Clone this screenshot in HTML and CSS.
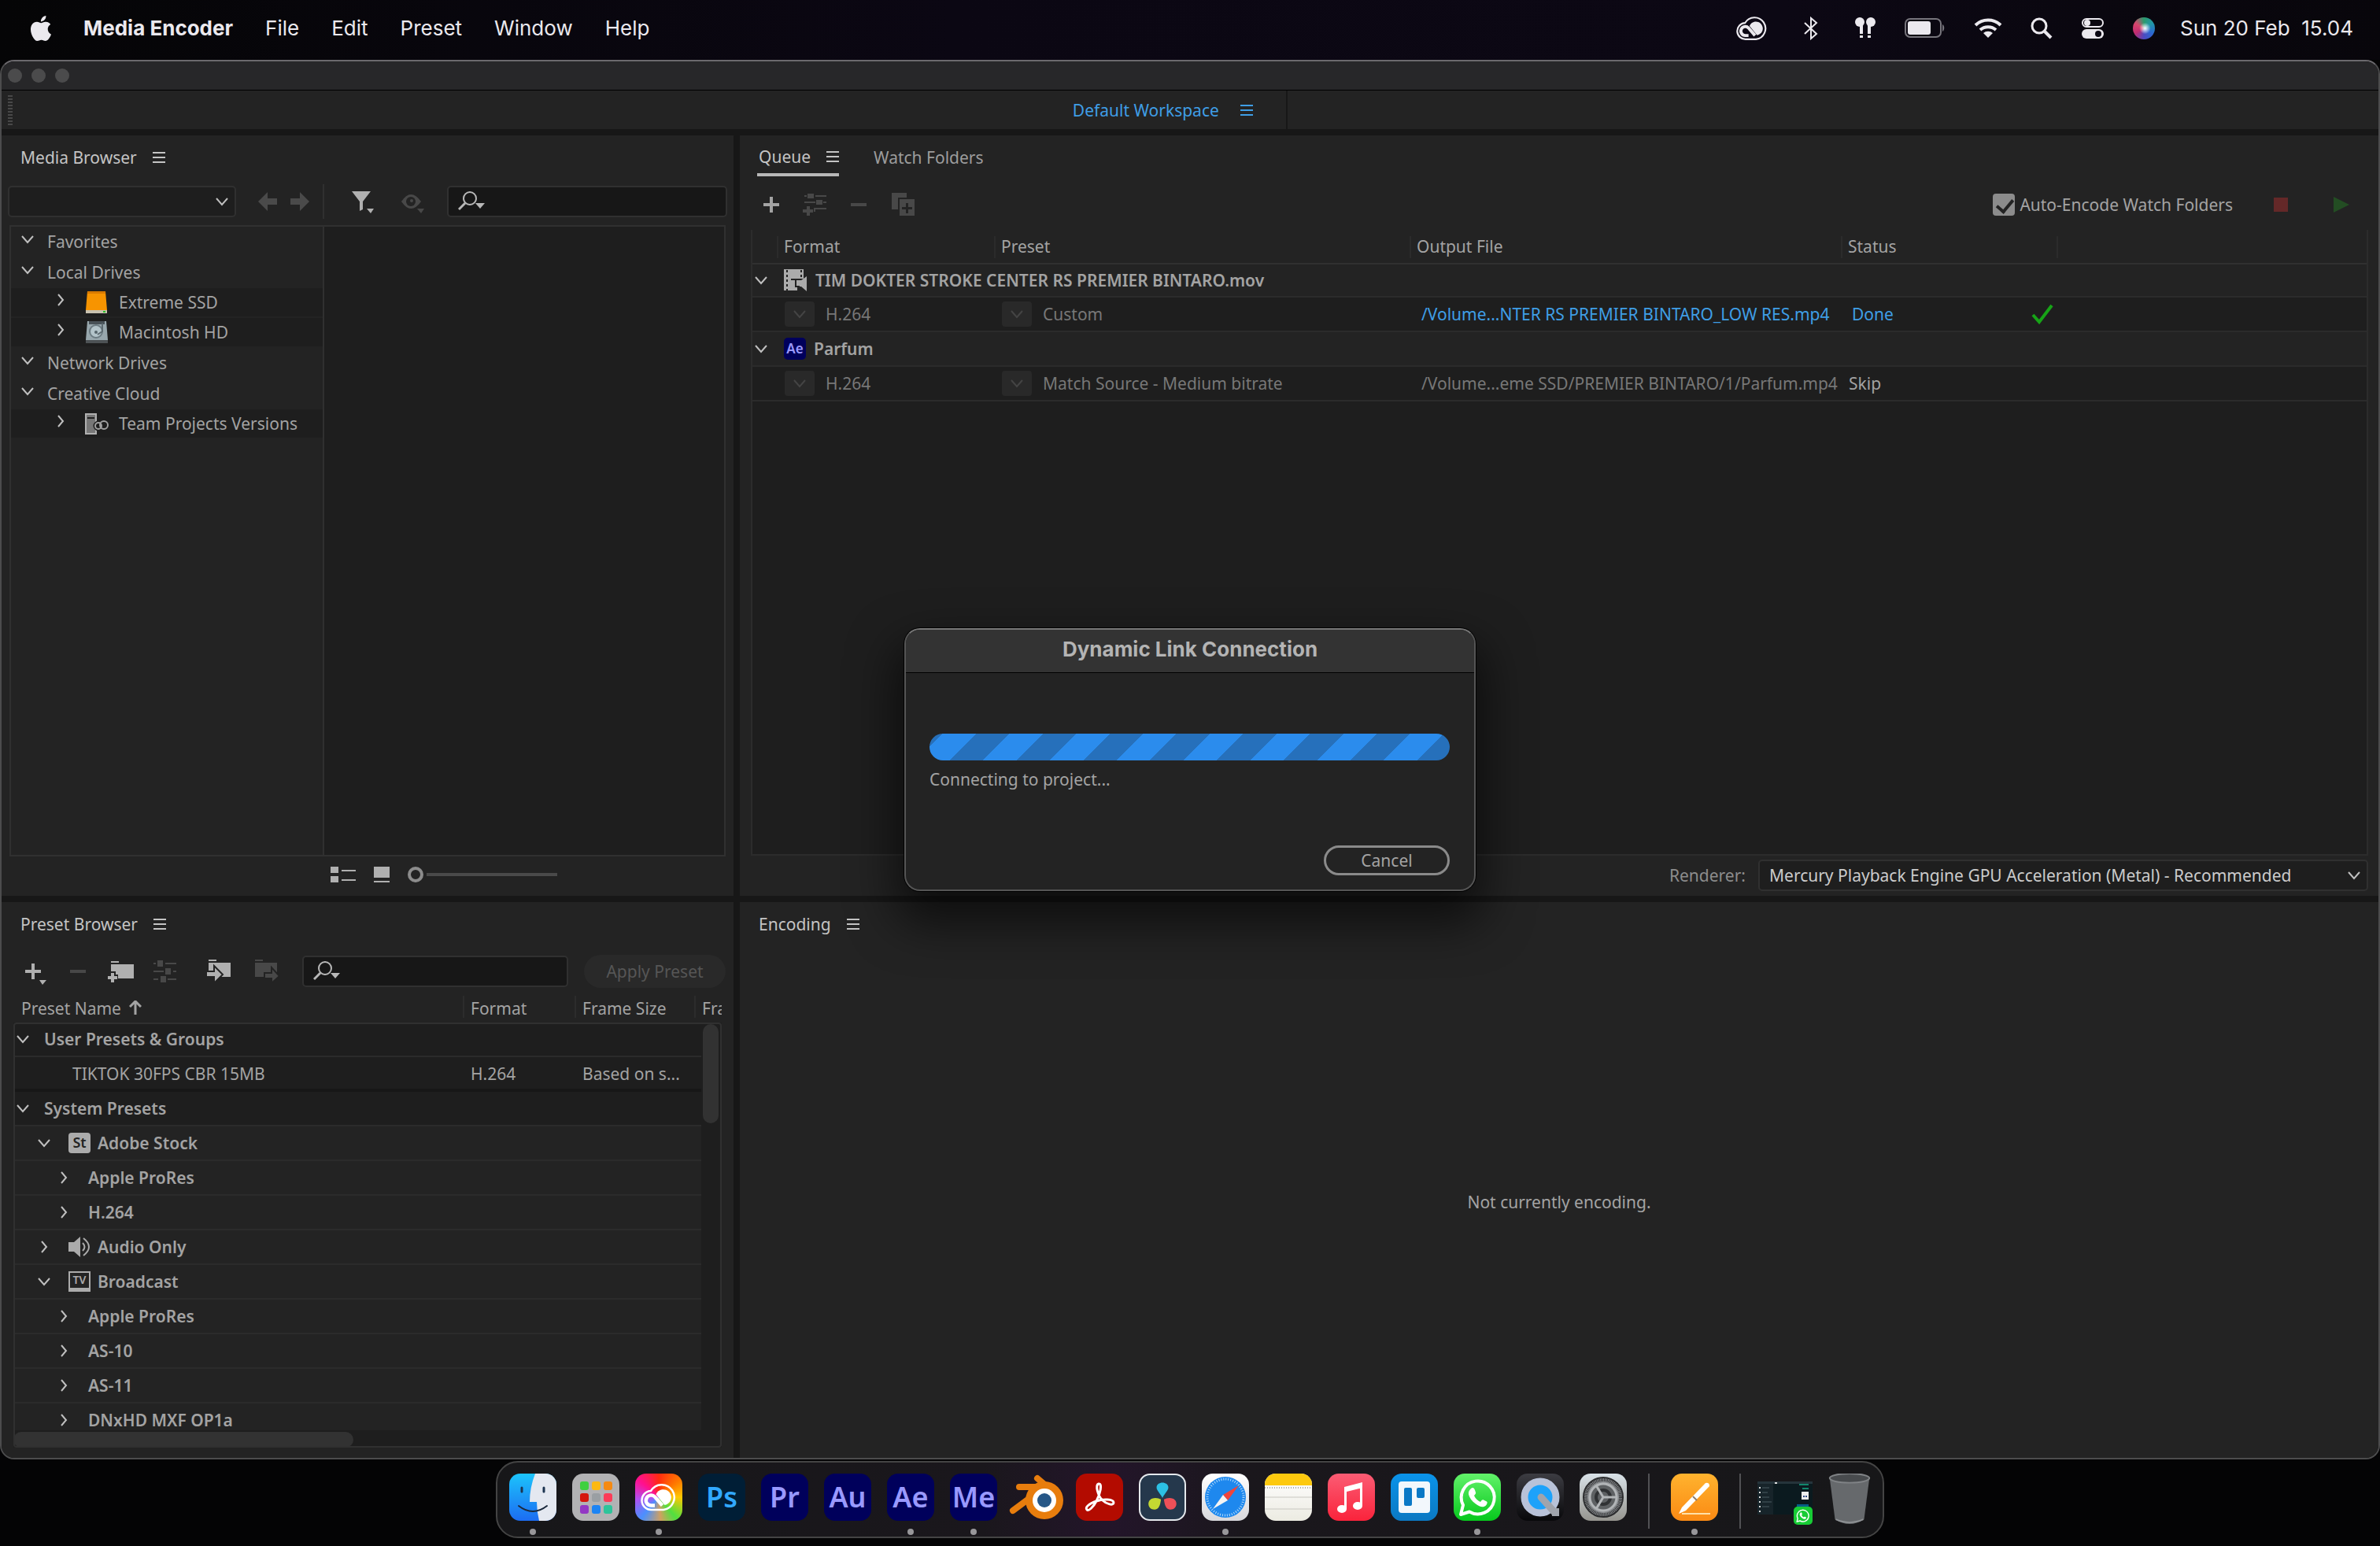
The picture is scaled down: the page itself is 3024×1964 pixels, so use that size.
FILE: index.html
```html
<!DOCTYPE html>
<html lang="en">

<head>
    <meta charset="UTF-8">
    <meta name="viewport" content="width=device-width, initial-scale=1.0">
    <title>Media Encoder</title>
    <link rel="stylesheet" href="styles.css">
</head>

<body>
    <!-- Shared icons -->
    <svg class="sprite" aria-hidden="true">
        <symbol id="i-down" viewBox="0 0 16 16"><path d="M1 4l7 8 7-8" fill="none" stroke="currentColor" stroke-width="2"/></symbol>
        <symbol id="i-right" viewBox="0 0 16 16"><path d="M5 1l6 7-6 7" fill="none" stroke="currentColor" stroke-width="2"/></symbol>
        <symbol id="i-menu" viewBox="0 0 16 16"><path d="M0 2h16M0 8h16M0 14h16" stroke="currentColor" stroke-width="2"/></symbol>
        <symbol id="i-plus" viewBox="0 0 28 36"><path d="M3 16h20v4H3zM11 8h4v20h-4z" fill="currentColor"/></symbol>
        <symbol id="i-minus" viewBox="0 0 28 36"><path d="M4 16h20v4H4z" fill="currentColor"/></symbol>
        <symbol id="i-search" viewBox="0 0 36 28"><circle cx="15" cy="10" r="8" fill="none" stroke="currentColor" stroke-width="2"/><path d="M9 16l-8 8" stroke="currentColor" stroke-width="3"/><path d="M22 16h12l-6 7z" fill="currentColor"/></symbol>
        <symbol id="i-cc" viewBox="0 0 46 36">
            <path d="M14 34a12 12 0 0 1-1-24A16 16 0 1 1 29 34z" fill="none" stroke="currentColor" stroke-width="2.500"/>
            <path d="M18 28.500h-4.500a6.500 6.500 0 1 1 4.500-11l9.500 11" fill="none" stroke="currentColor" stroke-width="4.500"/>
            <path d="M19.500 14.500A10 10 0 1 1 30.500 28z" fill="currentColor"/>
        </symbol>
        <symbol id="i-wa" viewBox="0 0 60 60">
            <path d="M9 52l3-12a21 21 0 1 1 8 8.500z" fill="none" stroke="#fff" stroke-width="4" stroke-linejoin="round"/>
            <path d="M22 19c2-2 4-1 5 2l1 3c.5 1-.5 2-2 4 2 4 4 6 8 8 2-3 3-3 4-2.500l4 2c1.500 1 0 4-1 5-3 3-8 2-13-2-5-3.500-8-8-9-12-.5-3 .5-5 3-7.500z" fill="#fff"/>
        </symbol>
        <symbol id="i-sliders" viewBox="0 0 30 30"><path d="M0 5h3M15 5h14M0 15h13M25 15h4M0 25h6M18 25h11" stroke="currentColor" stroke-width="2"/><path d="M5 1h7v8H5zM15 11h7v8h-7zM9 21h7v8H9z" fill="currentColor"/></symbol>
    </svg>

    <header class="menubar">
        <nav class="menus">
            <button class="apple" aria-label="Apple menu"><svg width="32" height="32" viewBox="0 0 24 24" fill="currentColor"><path d="M12.152 6.896c-.948 0-2.415-1.078-3.96-1.040-2.040.027-3.910 1.183-4.961 3.014-2.117 3.675-.546 9.103 1.519 12.090 1.013 1.454 2.208 3.090 3.792 3.039 1.520-.065 2.090-.987 3.935-.987 1.831 0 2.350.987 3.960.948 1.637-.026 2.676-1.480 3.676-2.948 1.156-1.688 1.636-3.325 1.662-3.415-.039-.013-3.182-1.221-3.220-4.857-.026-3.040 2.480-4.494 2.597-4.559-1.429-2.090-3.623-2.324-4.390-2.376-2-.156-3.675 1.090-4.610 1.090zM15.530 3.830c.843-1.012 1.400-2.427 1.245-3.830-1.207.052-2.662.805-3.532 1.818-.780.896-1.454 2.338-1.273 3.714 1.338.104 2.715-.688 3.559-1.701"/></svg></button>
            <button class="app-name">Media Encoder</button>
            <button>File</button>
            <button>Edit</button>
            <button>Preset</button>
            <button>Window</button>
            <button>Help</button>
        </nav>
        <div class="tray">
            <svg class="wide" width="40" height="32"><use href="#i-cc"/></svg>
            <svg class="wide" width="20" height="30" viewBox="0 0 20 30"><path d="M2 8l15 14-7 6V2l7 6L2 22" fill="none" stroke="currentColor" stroke-width="2"/></svg>
            <svg width="28" height="30" viewBox="0 0 28 30" fill="currentColor"><ellipse cx="7" cy="7" rx="6" ry="6"/><ellipse cx="21" cy="7" rx="6" ry="6"/><path d="M7 8h4v14H7zM17 8h4v14h-4zM7 24h4v3H7zM17 24h4v3h-4z"/></svg>
            <svg width="52" height="26" viewBox="0 0 52 26"><rect x="1" y="1" width="45" height="23" rx="6" fill="none" stroke="#77757c" stroke-width="2"/><rect x="4" y="4" width="29" height="17" rx="3" fill="currentColor"/><path d="M48 8c3 1 3 8 0 9z" fill="#77757c"/></svg>
            <svg width="36" height="26" viewBox="0 0 36 26"><path d="M2 9a23 23 0 0 1 32 0M8 15a15 15 0 0 1 20 0" fill="none" stroke="currentColor" stroke-width="4"/><path d="M18 25l-6-6a9 9 0 0 1 12 0z" fill="currentColor"/></svg>
            <svg width="28" height="28" viewBox="0 0 28 28"><circle cx="11" cy="11" r="9" fill="none" stroke="currentColor" stroke-width="3"/><path d="M18 18l8 8" stroke="currentColor" stroke-width="4"/></svg>
            <svg width="30" height="28" viewBox="0 0 30 28"><rect x="2" y="2" width="26" height="10" rx="5" fill="none" stroke="currentColor" stroke-width="2"/><circle cx="8" cy="7" r="4" fill="currentColor"/><rect x="1" y="15" width="28" height="12" rx="6" fill="currentColor"/><circle cx="22" cy="21" r="4" fill="#0b0712"/></svg>
            <span class="siri"></span>
            <time>Sun 20 Feb&nbsp; 15.04</time>
        </div>
    </header>

    <main class="window">
        <div class="titlebar"><i></i><i></i><i></i></div>
        <div class="workspace">
            <span class="grip"></span>
            <div class="workspace-tab">
                <a href="#">Default Workspace</a>
                <svg width="16" height="16"><use href="#i-menu"/></svg>
            </div>
        </div>

        <div class="panels">
            <section class="panel media">
                <div class="tabs"><h2>Media Browser</h2><svg width="16" height="16"><use href="#i-menu"/></svg></div>
                <div class="media-tools">
                    <div class="picker">
                        <select aria-label="Location"><option></option></select>
                        <svg width="16" height="16"><use href="#i-down"/></svg>
                    </div>
                    <div class="arrows">
                        <button aria-label="Back"><svg width="26" height="24" viewBox="0 0 26 24"><path d="M0 12L12 0v8h12v8H12v8z" fill="currentColor"/></svg></button>
                        <button aria-label="Forward"><svg width="26" height="24" viewBox="0 0 26 24"><path d="M25 12L13 0v8H1v8h12v8z" fill="currentColor"/></svg></button>
                    </div>
                    <div class="filters">
                        <button aria-label="Filter"><svg width="30" height="30" viewBox="0 0 30 30"><path d="M0 2h24l-10 13v10l-4 2V15zM19 24h9l-4 6z" fill="currentColor"/></svg></button>
                        <button class="off" aria-label="View"><svg width="32" height="30" viewBox="0 0 32 30"><path d="M1 15q12-18 25 0-13 18-25 0z" fill="currentColor"/><circle cx="13" cy="15" r="6" fill="#232323"/><circle cx="14" cy="14" r="2" fill="currentColor"/><path d="M21 24h9l-4 6z" fill="currentColor"/></svg></button>
                    </div>
                    <label class="search">
                        <svg width="36" height="28"><use href="#i-search"/></svg>
                        <input type="text" aria-label="Search media">
                    </label>
                </div>
                <div class="media-body">
                    <ul class="tree">
                        <li class="group"><svg width="16" height="16"><use href="#i-down"/></svg>Favorites</li>
                        <li class="group"><svg width="16" height="16"><use href="#i-down"/></svg>Local Drives</li>
                        <li class="leaf"><svg width="16" height="16"><use href="#i-right"/></svg>
                            <svg width="30" height="30" viewBox="0 0 30 30"><path d="M3 1h23l2 24H1z" fill="#f79400"/><path d="M3 1h23v3H3z" fill="#d97a00"/><path d="M1 25h27v4H1z" fill="#c9c2b0"/><path d="M23 26h3v2h-3z" fill="#2cc02c"/></svg>Extreme SSD</li>
                        <li class="leaf"><svg width="16" height="16"><use href="#i-right"/></svg>
                            <svg width="30" height="30" viewBox="0 0 30 30"><path d="M3 1h24l2 24H1z" fill="#98a7ad"/><path d="M5 1h20v4H5z" fill="#485157"/><circle cx="14" cy="14" r="8" fill="#b3c4ca" stroke="#6c7b82" stroke-width="2"/><circle cx="14" cy="15" r="2" fill="#56646b"/><path d="M22 4v10l-6 4" fill="none" stroke="#5d6a70" stroke-width="2"/><path d="M1 25h28v4H1z" fill="#4d5255"/></svg>Macintosh HD</li>
                        <li class="group"><svg width="16" height="16"><use href="#i-down"/></svg>Network Drives</li>
                        <li class="group"><svg width="16" height="16"><use href="#i-down"/></svg>Creative Cloud</li>
                        <li class="leaf"><svg width="16" height="16"><use href="#i-right"/></svg>
                            <svg width="30" height="30" viewBox="0 0 30 30"><path d="M1 3h13v25H1z" fill="#777" stroke="#b0b0b0" stroke-width="2"/><path d="M3 8h9" stroke="#222" stroke-width="2"/><g fill="none" stroke="#1e1e1e" stroke-width="5"><circle cx="17" cy="18" r="4"/><circle cx="24" cy="17" r="5"/></g><g fill="none" stroke="#a0a0a0" stroke-width="2"><circle cx="17" cy="18" r="4"/><circle cx="24" cy="17" r="5"/></g></svg>Team Projects Versions</li>
                    </ul>
                </div>
                <div class="view-bar">
                    <button aria-label="List view"><svg width="32" height="20" viewBox="0 0 32 20"><path d="M0 0h10v8H0zM14 4h18v2H14zM0 12h10v8H0zM14 16h18v2H14z" fill="currentColor"/></svg></button>
                    <button aria-label="Thumbnail view"><svg width="20" height="20" viewBox="0 0 20 20"><path d="M0 0h20v14H0zM0 18h20v2H0z" fill="currentColor"/></svg></button>
                    <input type="range" value="0" aria-label="Thumbnail size">
                </div>
            </section>

            <section class="panel queue">
                <div class="tabs">
                    <h2 class="active">Queue<svg width="16" height="16"><use href="#i-menu"/></svg></h2>
                    <button class="tab">Watch Folders</button>
                </div>
                <div class="queue-tools">
                    <button aria-label="Add source"><svg width="28" height="36"><use href="#i-plus"/></svg></button>
                    <button class="off" aria-label="Add output"><svg width="32" height="30" viewBox="0 0 32 30"><path d="M2 4h3M16 4h14M2 12h14M26 12h4M16 20h14M15 19v5" stroke="currentColor" stroke-width="2"/><path d="M6 1h8v6H6zM17 9h8v6h-8zM5 17h4v4h4v4H9v4H5v-4H0v-4h5z" fill="currentColor"/></svg></button>
                    <button class="off" aria-label="Remove"><svg width="28" height="36"><use href="#i-minus"/></svg></button>
                    <button class="off" aria-label="Duplicate"><svg width="30" height="30" viewBox="0 0 30 30"><path d="M0 0h19v6H8v15H0z" fill="currentColor"/><path d="M10 8h19v21H10zM18 13v5h-5v3h5v5h3v-5h5v-3h-5v-5z" fill="currentColor" fill-rule="evenodd"/></svg></button>
                    <label class="auto"><input type="checkbox" checked>Auto-Encode Watch Folders</label>
                    <button class="stop" aria-label="Stop queue"></button>
                    <button class="play" aria-label="Start queue"><svg width="20" height="20" viewBox="0 0 20 20"><path d="M0 0l20 10L0 20z" fill="#234d23"/></svg></button>
                </div>
                <div class="queue-list">
                    <table>
                        <colgroup><col class="q-pad"><col class="q-format"><col class="q-preset"><col class="q-file"><col class="q-status"><col></colgroup>
                        <thead>
                            <tr><th></th><th>Format</th><th>Preset</th><th>Output File</th><th>Status</th><th></th></tr>
                        </thead>
                        <tbody>
                            <tr class="source">
                                <td><svg width="16" height="16"><use href="#i-down"/></svg></td>
                                <td colspan="5"><div class="name"><svg width="30" height="30" viewBox="0 0 30 30"><path d="M0 1h25v12H14v10h3v5H0z" fill="#ababab"/><path d="M4 2v26M22 2v10" stroke="#232323" stroke-width="2" stroke-dasharray="3 3"/><path d="M16 15h6l7-5v19l-7-6h-6z" fill="#ababab"/><path d="M9 14h6v9h5" fill="none" stroke="#232323" stroke-width="2"/></svg>TIM DOKTER STROKE CENTER RS PREMIER BINTARO.mov</div></td>
                            </tr>
                            <tr class="job">
                                <td></td>
                                <td><div class="drop"><button aria-label="Choose format"><svg width="16" height="16"><use href="#i-down"/></svg></button>H.264</div></td>
                                <td><div class="drop"><button aria-label="Choose preset"><svg width="16" height="16"><use href="#i-down"/></svg></button>Custom</div></td>
                                <td class="file"><a href="#">/Volume...NTER RS PREMIER BINTARO_LOW RES.mp4</a></td>
                                <td><div class="status"><a href="#">Done</a><svg width="28" height="26" viewBox="0 0 28 26"><path d="M2 14l8 9L26 2" fill="none" stroke="#17a317" stroke-width="4"/></svg></div></td>
                                <td></td>
                            </tr>
                            <tr class="source">
                                <td><svg width="16" height="16"><use href="#i-down"/></svg></td>
                                <td colspan="5"><div class="name"><span class="ae">Ae</span>Parfum</div></td>
                            </tr>
                            <tr class="job">
                                <td></td>
                                <td><div class="drop"><button aria-label="Choose format"><svg width="16" height="16"><use href="#i-down"/></svg></button>H.264</div></td>
                                <td><div class="drop"><button aria-label="Choose preset"><svg width="16" height="16"><use href="#i-down"/></svg></button>Match Source - Medium bitrate</div></td>
                                <td class="file">/Volume...eme SSD/PREMIER BINTARO/1/Parfum.mp4</td>
                                <td class="skip">Skip</td>
                                <td></td>
                            </tr>
                        </tbody>
                    </table>
                </div>
                <div class="renderer">
                    <label for="renderer">Renderer:</label>
                    <div class="picker">
                        <select id="renderer"><option>Mercury Playback Engine GPU Acceleration (Metal) - Recommended</option></select>
                        <svg width="16" height="16"><use href="#i-down"/></svg>
                    </div>
                </div>
            </section>

            <section class="panel presets">
                <div class="tabs"><h2>Preset Browser</h2><svg width="16" height="16"><use href="#i-menu"/></svg></div>
                <div class="preset-tools">
                    <button aria-label="New preset"><svg width="32" height="40" viewBox="0 0 32 40"><path d="M3 18h20v4H3zM11 10h4v20h-4zM21 31h9l-5 6z" fill="currentColor"/></svg></button>
                    <button class="off" aria-label="Delete preset"><svg width="28" height="36"><use href="#i-minus"/></svg></button>
                    <button aria-label="New group"><svg width="34" height="30" viewBox="0 0 34 30"><path d="M4 2h10v2H4zM4 6h29v18H13v-5h-3v-4H4z" fill="currentColor"/><path d="M4 17h4v4h4v4H8v4H4v-4H0v-4h4z" fill="currentColor"/></svg></button>
                    <button class="off" aria-label="Preset settings"><svg width="30" height="30"><use href="#i-sliders"/></svg></button>
                    <button class="import" aria-label="Import preset"><svg width="34" height="30" viewBox="0 0 34 30"><path d="M4 0h10v2H4zM4 4h28v18H4z" fill="currentColor"/><path d="M1 15h10V8l11 11-11 11v-8H1z" fill="currentColor" stroke="#232323" stroke-width="2"/></svg></button>
                    <button class="off" aria-label="Export preset"><svg width="34" height="30" viewBox="0 0 34 30"><path d="M2 0h10v2H2zM2 4h28v18H2z" fill="currentColor"/><path d="M14 17h9v-7l10 11-10 9v-6h-9z" fill="currentColor" stroke="#232323" stroke-width="2"/></svg></button>
                    <label class="search">
                        <svg width="36" height="28"><use href="#i-search"/></svg>
                        <input type="text" aria-label="Search presets">
                    </label>
                    <button class="apply" disabled>Apply Preset</button>
                </div>
                <div class="preset-list">
                    <table>
                        <colgroup><col><col class="p-format"><col class="p-size"><col class="p-rate"></colgroup>
                        <thead>
                            <tr><th>Preset Name<svg width="16" height="18" viewBox="0 0 16 18"><path d="M8 1v17M1 8l7-7 7 7" fill="none" stroke="currentColor" stroke-width="3"/></svg></th><th>Format</th><th>Frame Size</th><th>Fra</th></tr>
                        </thead>
                        <tbody>
                            <tr class="root"><td colspan="4"><div class="name"><svg width="16" height="16"><use href="#i-down"/></svg>User Presets &amp; Groups</div></td></tr>
                            <tr class="preset"><td>TIKTOK 30FPS CBR 15MB</td><td>H.264</td><td>Based on s...</td><td></td></tr>
                            <tr class="root"><td colspan="4"><div class="name"><svg width="16" height="16"><use href="#i-down"/></svg>System Presets</div></td></tr>
                            <tr><td colspan="4"><div class="name level-1"><svg width="16" height="16"><use href="#i-down"/></svg><span class="st">St</span>Adobe Stock</div></td></tr>
                            <tr><td colspan="4"><div class="name level-2"><svg width="16" height="16"><use href="#i-right"/></svg>Apple ProRes</div></td></tr>
                            <tr><td colspan="4"><div class="name level-2"><svg width="16" height="16"><use href="#i-right"/></svg>H.264</div></td></tr>
                            <tr><td colspan="4"><div class="name level-1"><svg width="16" height="16"><use href="#i-right"/></svg><svg width="28" height="26" viewBox="0 0 28 26"><path d="M0 7h7l8-7v26l-8-7H0z" fill="#ababab"/><path d="M18 8q5 5 0 10M19 2q14 11 0 22" fill="none" stroke="#ababab" stroke-width="2"/></svg>Audio Only</div></td></tr>
                            <tr><td colspan="4"><div class="name level-1"><svg width="16" height="16"><use href="#i-down"/></svg><span class="tv">TV</span>Broadcast</div></td></tr>
                            <tr><td colspan="4"><div class="name level-2"><svg width="16" height="16"><use href="#i-right"/></svg>Apple ProRes</div></td></tr>
                            <tr><td colspan="4"><div class="name level-2"><svg width="16" height="16"><use href="#i-right"/></svg>AS-10</div></td></tr>
                            <tr><td colspan="4"><div class="name level-2"><svg width="16" height="16"><use href="#i-right"/></svg>AS-11</div></td></tr>
                            <tr><td colspan="4"><div class="name level-2"><svg width="16" height="16"><use href="#i-right"/></svg>DNxHD MXF OP1a</div></td></tr>
                        </tbody>
                    </table>
                    <div class="v-scroll"></div>
                    <div class="h-scroll"></div>
                    <div class="frame"></div>
                </div>
            </section>

            <section class="panel encoding">
                <div class="tabs"><h2>Encoding</h2><svg width="16" height="16"><use href="#i-menu"/></svg></div>
                <p class="empty">Not currently encoding.</p>
            </section>
        </div>
    </main>

    <div class="dialog" role="dialog" aria-labelledby="dialog-title">
        <h1 id="dialog-title">Dynamic Link Connection</h1>
        <div class="dialog-body">
            <div class="progress" role="progressbar" aria-label="Connecting"></div>
            <p>Connecting to project...</p>
            <button class="cancel">Cancel</button>
        </div>
    </div>

    <footer class="dock">
        <div class="app finder running"><svg viewBox="0 0 60 60"><path d="M33 0h27v60H38q-3-12-3-24h-9Q26 18 33 0z" fill="#e4e8f0"/><path d="M16 18v5M44 18v5" stroke="#1c3450" stroke-width="3" stroke-linecap="round"/><path d="M12 41q18 14 36 0" fill="none" stroke="#1c2a3c" stroke-width="2" stroke-linecap="round"/></svg></div>
        <div class="app launchpad"><i></i><i></i><i></i><i></i><i></i><i></i><i></i><i></i><i></i></div>
        <div class="app cloud running"><svg class="cc" viewBox="0 0 46 36"><use href="#i-cc"/></svg></div>
        <div class="app adobe ps">Ps</div>
        <div class="app adobe">Pr</div>
        <div class="app adobe">Au</div>
        <div class="app adobe running">Ae</div>
        <div class="app adobe running">Me</div>
        <div class="app blender"><svg viewBox="0 0 68 60"><path d="M4 47L31 27M12 17h34M35 6l20 17" stroke="#e87d0d" stroke-width="8" stroke-linecap="round"/><path d="M26 24l16-8 14 4v10L26 36z" fill="#e87d0d"/><circle cx="44" cy="34" r="24" fill="#e87d0d"/><circle cx="44" cy="34" r="15" fill="#fff"/><circle cx="44" cy="34" r="9" fill="#265787"/></svg></div>
        <div class="app acrobat"><svg viewBox="0 0 60 60"><path d="M14 46c-3-3 3-8 12-11 8-3 22-3 22 2 0 4-9 2-14-3-6-5-10-20-5-21s2 13-3 22c-4 8-10 13-12 11z" fill="none" stroke="#fff" stroke-width="3"/></svg></div>
        <div class="app davinci"><svg viewBox="0 0 60 60"><path d="M30 31c-3-6-8-10-8-14 0-9 16-9 16 0 0 4-5 8-8 14z" fill="#2cc0e4"/><path d="M28 33c-1 8-3 14-9 14-9 0-11-12-3-15 5-2 9 0 12 1z" fill="#c4d832"/><path d="M32 33c1 8 3 14 9 14 9 0 11-12 3-15-5-2-9 0-12 1z" fill="#ee5058"/></svg></div>
        <div class="app safari running"><svg viewBox="0 0 60 60"><circle cx="30" cy="30" r="26" fill="#1e88ee"/><circle cx="30" cy="30" r="23" fill="none" stroke="#b6dcfb" stroke-width="3" stroke-dasharray="1 2"/><path d="M47 15L33 34l-6-7z" fill="#f0443c"/><path d="M14 45l13-18 6 7z" fill="#f4f4f4"/></svg></div>
        <div class="app notes"><svg viewBox="0 0 60 60"><path d="M0 0h60v15H0z" fill="#fdc90e"/><path d="M0 18h60" stroke="#b0aea6" stroke-width="2" stroke-dasharray="1 2"/><path d="M0 30h60M0 45h60" stroke="#c8c7c0"/></svg></div>
        <div class="app music"><svg viewBox="0 0 60 60"><path d="M21 17l23-6v7l-20 5v22h-3zM41 14h3v27h-3z" fill="#fff"/><ellipse cx="18" cy="45" rx="6" ry="5" fill="#fff"/><ellipse cx="38" cy="41" rx="6" ry="5" fill="#fff"/></svg></div>
        <div class="app trello"><svg viewBox="0 0 60 60"><rect x="10" y="10" width="40" height="40" rx="4" fill="#f2f7fc"/><rect x="17" y="18" width="10" height="23" rx="2" fill="#0a78c6"/><rect x="33" y="18" width="10" height="13" rx="2" fill="#0a78c6"/></svg></div>
        <div class="app whatsapp running"><svg viewBox="0 0 60 60"><use href="#i-wa"/></svg></div>
        <div class="app quicktime"><svg viewBox="0 0 60 60"><circle cx="30" cy="30" r="20" fill="#1da2fa" stroke="#b8c2d8" stroke-width="9"/><path d="M31 30l17 19" stroke="#a0a4ac" stroke-width="9" stroke-linecap="round"/><path d="M44 44h10v10h-9z" fill="#a0a4ac"/></svg></div>
        <div class="app settings"><svg viewBox="0 0 60 60"><circle cx="30" cy="30" r="25" fill="#8a8d90" stroke="#2c2d2f" stroke-width="2"/><circle cx="30" cy="30" r="22" fill="none" stroke="#333436" stroke-width="4" stroke-dasharray="1 1"/><circle cx="30" cy="30" r="17" fill="#5e6163" stroke="#b2b5b7" stroke-width="3"/><circle cx="30" cy="30" r="9" fill="none" stroke="#303234" stroke-width="4"/><path d="M30 30h17M30 30l-9-15M30 30l-9 15" stroke="#b2b5b7" stroke-width="3"/></svg></div>
        <span class="divider"></span>
        <div class="app pages running"><svg viewBox="0 0 60 60"><path d="M10 51l4-8 30-31q5-1 5 4L19 47z" fill="#fff"/><path d="M28 29l5 5" stroke="#8a7c70" stroke-width="2"/><path d="M14 51h36" stroke="#ffe0a8" stroke-width="2"/></svg></div>
        <span class="divider"></span>
        <div class="mini"><svg viewBox="0 0 70 60"><path d="M0 10h70v42H0z" fill="#0b1a1f"/><path d="M0 10h20v42H0z" fill="#17242a"/><path d="M0 10h70v3H0z" fill="#25343b"/><path d="M2 18h2M2 24h2M2 30h2M2 36h2M2 42h2M2 48h2M22 12h3" stroke="#ddd" stroke-width="2"/><path d="M6 18h9M6 24h7M6 30h9M6 36h12M6 42h9" stroke="#4a5a60"/><path d="M53 14h12M57 19h8" stroke="#12856c" stroke-width="2"/><path d="M56 23h9v10h-9z" fill="#eee"/><path d="M58 28h2v2h-2zM61 28h2v2h-2z" fill="#334c88"/><path d="M50 39h15v4H50z" fill="#075f86"/><rect x="46" y="42" width="24" height="23" rx="5" fill="#17cc35"/><use href="#i-wa" x="47" y="43" width="21" height="21"/></svg></div>
        <div class="trash"><svg viewBox="0 0 54 68"><path d="M1 6l7 54q19 12 38 0l7-54z" fill="#66696c"/><ellipse cx="27" cy="6" rx="26" ry="6" fill="#484b4e" stroke="#808386" stroke-width="2"/><path d="M9 60q18 8 36 0" fill="none" stroke="#8e9194" stroke-width="2"/></svg></div>
    </footer>
</body>

</html>
```
FILE: styles.css
```css
* {
    box-sizing: border-box;
}

body {
    margin: 0;
    height: 100vh;
    display: flex;
    flex-direction: column;
    overflow: hidden;
    position: relative;
    background: #040405;
    color: #a3a3a3;
    font-family: "Noto Sans", sans-serif;
    font-size: 21px;
    line-height: 28px;
}

svg {
    display: block;
    flex: none;
}

button {
    display: block;
    flex: none;
    padding: 0;
    border: 0;
    background: none;
    color: inherit;
    font: inherit;
}

a {
    color: #3f9ee6;
    text-decoration: none;
}

h1,
h2,
p,
ul {
    margin: 0;
    padding: 0;
    font-size: inherit;
    font-weight: normal;
    list-style: none;
}

.sprite {
    position: absolute;
    width: 0;
    height: 0;
}

/* menu bar */
.menubar {
    height: 76px;
    flex: none;
    display: flex;
    justify-content: space-between;
    align-items: center;
    padding: 0 34px 4px 36px;
    background: linear-gradient(90deg, #050506, #0b0713 40%, #0c0814 75%, #08060b);
    color: #ebe9ee;
    font-family: Inter, sans-serif;
    font-size: 26px;
    font-weight: 400;
}

.menus,
.tray {
    display: flex;
    align-items: center;
}

.menus {
    gap: 41px;
}

.menus .apple {
    margin-right: -3px;
}

.menus .app-name {
    font-weight: 700;
}

.tray {
    gap: 36px;
}

.tray .wide {
    margin-right: 9px;
}

.siri {
    width: 28px;
    height: 28px;
    margin-right: -4px;
    border-radius: 50%;
    background: radial-gradient(circle at 55% 50%, #fff 0, transparent 35%), conic-gradient(#2c9a6c, #2196a8, #2b68d0, #4d4ac0, #c02c70, #d6456c, #2c9a6c);
}

/* window */
.window {
    flex: 1;
    min-height: 0;
    display: flex;
    flex-direction: column;
    margin-bottom: 110px;
    border: 2px solid #4c4c4d;
    border-top-color: #6b696d;
    border-radius: 18px;
    background: #171717;
    overflow: hidden;
}

.titlebar {
    height: 37px;
    flex: none;
    display: flex;
    align-items: center;
    gap: 12px;
    padding: 0 8px;
    background: #272729;
    border-bottom: 1px solid #000;
}

.titlebar i {
    width: 18px;
    height: 18px;
    border-radius: 50%;
    background: #4b4b4c;
}

.workspace {
    height: 49px;
    flex: none;
    display: flex;
    align-items: center;
    background: #232323;
}

.grip {
    width: 6px;
    height: 38px;
    margin-left: 8px;
    background: repeating-linear-gradient(#484848 0 2px, transparent 2px 4px);
}

.workspace-tab {
    height: 100%;
    display: flex;
    align-items: center;
    gap: 27px;
    margin-left: auto;
    margin-right: calc(46% - 3px);
    padding-right: 42px;
    border-right: 2px solid #171717;
    color: #3f9ee6;
}

.panels {
    flex: 1;
    min-height: 0;
    display: grid;
    grid-template-columns: 930fr 2082fr;
    grid-template-rows: 966fr 706fr;
    gap: 8px;
    padding-top: 8px;
}

.panel {
    min-width: 0;
    min-height: 0;
    display: flex;
    flex-direction: column;
    background: #232323;
}

.tabs {
    height: 56px;
    flex: none;
    display: flex;
    align-items: center;
    gap: 20px;
    padding: 0 24px;
    color: #c4c4c4;
}

.off {
    color: #484848;
}

/* fields */
.picker {
    position: relative;
    display: flex;
}

.picker select {
    width: 100%;
    height: 40px;
    padding: 0 12px;
    border: 2px solid #303030;
    border-radius: 5px;
    background: #1e1e1e;
    color: #cbcbcb;
    font: inherit;
    appearance: none;
}

.picker svg {
    position: absolute;
    right: 10px;
    top: 12px;
    color: #c0c0c0;
}

.search {
    min-width: 0;
    display: flex;
    align-items: center;
    height: 40px;
    padding-left: 12px;
    border: 2px solid #303030;
    border-radius: 5px;
    background: #171717;
    color: #b8b8b8;
}

.search input {
    flex: 1;
    min-width: 0;
    border: 0;
    background: none;
    color: inherit;
    font: inherit;
}

/* media browser */
.media-tools {
    display: flex;
    align-items: center;
    padding: 6px 8px 8px;
}

.media-tools .picker {
    width: 290px;
}

.arrows {
    height: 44px;
    display: flex;
    align-items: center;
    gap: 14px;
    padding: 0 16px 0 28px;
    border-right: 2px solid #303030;
    color: #4a4a4a;
}

.filters {
    display: flex;
    gap: 32px;
    padding: 0 27px 0 35px;
}

.filters button:first-child {
    color: #b0b0b0;
}

.media-tools .search {
    flex: 1;
}

.media-body {
    flex: 1;
    margin: 0 10px;
    border: 2px solid #303030;
    background: #1e1e1e;
}

.tree {
    width: 398px;
    height: 100%;
    background: #232323;
    border-right: 2px solid #303030;
}

.tree li {
    display: flex;
    align-items: center;
}

.tree svg:first-child {
    color: #c0c0c0;
    margin-bottom: 6px;
}

.group {
    height: 39px;
    gap: 17px;
    padding: 0 0 2px 13px;
}

.leaf {
    height: 38px;
    gap: 13px;
    padding-left: 55px;
    background: #1e1e1e;
    border-bottom: 2px solid #232323;
}

.leaf svg:first-child {
    margin-right: 10px;
}

.view-bar {
    height: 50px;
    flex: none;
    display: flex;
    align-items: center;
    gap: 23px;
    padding: 0 0 4px 418px;
    color: #b0b0b0;
}

.view-bar input {
    width: 190px;
    height: 20px;
    margin: 0;
    appearance: none;
    background: linear-gradient(#4a4a4a, #4a4a4a) 24px 8px / 166px 4px no-repeat;
}

.view-bar input::-webkit-slider-thumb {
    appearance: none;
    width: 20px;
    height: 20px;
    border: 4px solid #8c8c8c;
    border-radius: 50%;
    background: #232323;
}

/* queue */
.queue .tabs {
    gap: 44px;
    padding: 0 22px;
}

.active {
    height: 52px;
    display: flex;
    align-items: center;
    gap: 20px;
    align-self: flex-start;
    padding: 6px 0 0 2px;
    border-bottom: 4px solid #b8b8b8;
}

.tab {
    color: #9c9c9c;
}

.queue-tools {
    height: 64px;
    flex: none;
    display: flex;
    align-items: center;
    padding: 0 37px 0 27px;
    color: #a3a3a3;
}

.queue-tools button {
    margin-right: 25px;
}

.queue-tools button:nth-child(3) {
    margin-right: 28px;
}

.auto {
    display: flex;
    align-items: center;
    gap: 6px;
    margin-left: auto;
}

.auto input {
    width: 28px;
    height: 28px;
    margin: 0;
    border-radius: 4px;
    appearance: none;
    background: #8c8c8c;
}

.auto input::after {
    content: "";
    display: block;
    width: 9px;
    height: 17px;
    margin: 3px 9px;
    border: solid #232323;
    border-width: 0 4px 4px 0;
    transform: rotate(40deg);
}

.queue-tools .stop {
    width: 18px;
    height: 18px;
    margin: 0 58px 0 52px;
    background: #642828;
}

.queue-tools .play {
    margin-right: 0;
}

table {
    width: 100%;
    border-collapse: separate;
    border-spacing: 0;
    table-layout: fixed;
}

th,
td {
    padding: 0;
    text-align: left;
    font-weight: normal;
    white-space: nowrap;
    overflow: hidden;
}

.name,
.drop,
.status {
    display: flex;
    align-items: center;
}

.name {
    gap: 10px;
    font-weight: 600;
}

.queue-list {
    flex: 1;
    min-height: 0;
    margin: 0 13px 0 14px;
    background: linear-gradient(#232323 42px, #1e1e1e 42px);
    border: 2px solid #2c2c2c;
    border-top: 0;
}

.q-pad {
    width: 31px;
}

.q-format {
    width: 276px;
}

.q-preset {
    width: 528px;
}

.q-file {
    width: 548px;
}

.q-status {
    width: 274px;
}

.queue-list th {
    height: 44px;
    padding-left: 9px;
    border-bottom: 2px solid #303030;
    background: linear-gradient(#2b2b2b, #2b2b2b) 0 8px / 2px 28px no-repeat;
}

.queue-list th:first-child {
    background: none;
}

.queue-list td {
    height: 44px;
    border-bottom: 2px solid #2b2b2b;
}

.queue-list tbody tr:first-child td {
    height: 42px;
}

.source td {
    background: #232323;
    padding-left: 9px;
}

.source td:first-child {
    padding-left: 3px;
    color: #c0c0c0;
}

.job td {
    padding-left: 10px;
    color: #777;
}

.drop {
    gap: 14px;
}

.drop button {
    width: 38px;
    height: 32px;
    padding: 8px 11px;
    border-radius: 4px;
    background: #292929;
    color: #444;
}

.job .file {
    padding-left: 15px;
}

.job .skip {
    color: #a3a3a3;
}

.status {
    justify-content: space-between;
    padding: 0 4px;
}

.ae {
    width: 28px;
    height: 28px;
    border-radius: 5px;
    background: #00005b;
    color: #9999ff;
    font-size: 17px;
    text-align: center;
}

.renderer {
    height: 51px;
    flex: none;
    display: flex;
    align-items: center;
    justify-content: flex-end;
    gap: 16px;
    padding: 0 13px 2px 0;
    color: #8c8c8c;
}

.renderer .picker {
    width: 775px;
}

/* preset browser */
.preset-tools {
    height: 61px;
    flex: none;
    display: flex;
    align-items: center;
    padding: 3px 10px 0 27px;
    color: #b0b0b0;
}

.preset-tools button {
    margin-right: 24px;
}

.preset-tools .off {
    color: #484848;
}

.preset-tools .import {
    margin-left: 12px;
    margin-right: 27px;
}

.preset-tools .search {
    flex: 1;
    margin-left: 4px;
}

.preset-tools .apply {
    width: 180px;
    height: 42px;
    margin: 0 0 0 20px;
    border-radius: 21px;
    background: #292929;
    color: #565656;
}

.preset-list {
    position: relative;
    flex: 1;
    min-height: 0;
    margin: 0 15px 13px;
    overflow: hidden;
}

.p-format {
    width: 142px;
}

.p-size {
    width: 152px;
}

.p-rate {
    width: 35px;
}

.preset-list th {
    height: 36px;
    padding-left: 10px;
    background: linear-gradient(#2c2c2c, #2c2c2c) 0 2px / 2px 28px no-repeat;
}

.preset-list th:first-child {
    background: none;
}

.preset-list th svg {
    display: inline-block;
    margin-left: 10px;
}

.preset-list td {
    height: 44px;
    padding-left: 10px;
    border-bottom: 2px solid #2b2b2b;
}

.preset-list td:first-child {
    padding-left: 4px;
}

.root td,
.preset td {
    background: #1e1e1e;
}

.preset-list .preset td {
    padding-top: 2px;
    border-bottom: 4px solid #171717;
}

.preset-list .preset td:first-child {
    padding-left: 75px;
}

.preset-list .name {
    gap: 19px;
}

.preset-list .name svg:first-child {
    color: #c0c0c0;
}

.preset-list .level-1 {
    gap: 9px;
    padding-left: 27px;
}

.preset-list .level-1 svg:first-child {
    margin-right: 6px;
}

.preset-list .level-1 > :nth-child(2) {
    margin-left: 8px;
}

.preset-list .level-2 {
    gap: 23px;
    padding-left: 52px;
}

.st,
.tv {
    width: 28px;
    height: 26px;
    border-radius: 4px;
    background: #ababab;
    color: #232323;
    font-size: 18px;
    line-height: 24px;
    text-align: center;
}

.tv {
    border: 2px solid #ababab;
    border-bottom-width: 5px;
    border-radius: 0;
    background: none;
    color: #ababab;
    font-size: 14px;
    line-height: 18px;
}

.v-scroll {
    position: absolute;
    top: 36px;
    right: 1px;
    bottom: 0;
    width: 25px;
    background: #1e1e1e;
}

.v-scroll::before {
    content: "";
    display: block;
    width: 20px;
    height: 126px;
    margin: 2px;
    border-radius: 10px;
    background: #323232;
}

.h-scroll {
    position: absolute;
    left: 0;
    right: 0;
    bottom: 0;
    height: 22px;
    padding-top: 2px;
    background: #1e1e1e;
}

.h-scroll::before {
    content: "";
    display: block;
    width: 48%;
    height: 20px;
    border-radius: 10px;
    background: #323232;
}

.frame {
    position: absolute;
    inset: 36px 0 0 0;
    border: 2px solid #303030;
    border-radius: 4px;
}

.empty {
    flex: 1;
    display: flex;
    align-items: center;
    justify-content: center;
}

/* dialog */
.dialog {
    position: absolute;
    top: 798px;
    left: 50%;
    width: 726px;
    transform: translateX(-50%);
    border: 2px solid #555;
    border-top-color: #777;
    border-radius: 20px;
    background: #232323;
    box-shadow: 0 0 0 1px #000, 0 30px 60px 10px rgba(0, 0, 0, 0.6);
    overflow: hidden;
}

.dialog h1 {
    height: 55px;
    border-bottom: 1px solid #000;
    background: #333;
    color: #b4b4b4;
    font-family: Inter, sans-serif;
    font-size: 26px;
    font-weight: 700;
    line-height: 50px;
    text-align: center;
}

.dialog-body {
    padding: 77px 31px 18px 30px;
}

.progress {
    height: 34px;
    border-radius: 17px;
    background: repeating-linear-gradient(135deg, #2670bb 0 12px, #2b8ced 12px 42px, #2670bb 42px 60px);
}

.dialog-body p {
    padding: 10px 0 70px;
}

.cancel {
    width: 160px;
    height: 38px;
    margin-left: auto;
    border: 3px solid #8a8a8a;
    border-radius: 19px;
}

/* dock */
.dock {
    position: absolute;
    bottom: 10px;
    left: 50%;
    height: 98px;
    display: flex;
    align-items: flex-start;
    gap: 20px;
    padding: 14px 15px 0;
    transform: translateX(-50%);
    border: 2px solid #444;
    border-radius: 28px;
    background: linear-gradient(90deg, #171719, #1a171c 35%, #23152a 44%, #1a171c 54%, #171719);
}

.app {
    position: relative;
    width: 60px;
    height: 60px;
    flex: none;
    border-radius: 14px;
}

.app svg {
    width: 100%;
    height: 100%;
    border-radius: 14px;
}

.running::after {
    content: "";
    position: absolute;
    bottom: -18px;
    left: 26px;
    width: 8px;
    height: 8px;
    border-radius: 50%;
    background: #98979a;
}

.finder {
    background: linear-gradient(#1cc4fb, #1c6cf2);
}

.launchpad {
    display: grid;
    grid-template-columns: repeat(3, 11px);
    gap: 4px;
    place-content: center;
    background: #b2b2b4;
}

.launchpad i {
    height: 11px;
    border-radius: 3px;
    background: #3fd03f;
}

.launchpad i:nth-child(2) { background: #fcb912; }
.launchpad i:nth-child(3) { background: #f58a13; }
.launchpad i:nth-child(4) { background: #d5180e; }
.launchpad i:nth-child(5) { background: #9a9fa3; }
.launchpad i:nth-child(6) { background: #fb3c58; }
.launchpad i:nth-child(7) { background: #9338c4; }
.launchpad i:nth-child(8) { background: #1c84f4; }
.launchpad i:nth-child(9) { background: #2ec49a; }

.cloud {
    padding: 12px 7px;
    background: conic-gradient(from 0deg, #ff2a10, #ff7800 50deg, #ffc800 90deg, #50e040 140deg, #d0a060 175deg, #4a90ff 220deg, #b050f0 265deg, #ff1090 310deg, #ff2a10);
    color: #fff;
}

.cloud .cc {
    border-radius: 0;
}

.adobe {
    background: #00005b;
    color: #9999ff;
    font-size: 36px;
    font-weight: 600;
    line-height: 60px;
    text-align: center;
}

.ps {
    background: #001e36;
    color: #31a8ff;
}

.blender svg {
    width: 68px;
    height: 60px;
    margin-left: -4px;
    border-radius: 0;
    overflow: visible;
}

.acrobat { background: #b30b00; }
.davinci { border: 2px solid #e4e8ec; background: #25384c; }
.safari { background: linear-gradient(#fff, #d8d8dc); }
.notes { background: linear-gradient(#fff, #ecebe2); }
.music { background: linear-gradient(#fb5c74, #fa233b); }
.trello { background: linear-gradient(#0a93ea, #0b78c2); }
.whatsapp { background: linear-gradient(#62f26a, #06c81c); }
.quicktime { background: linear-gradient(#3c3c42, #08080a); }
.settings { background: linear-gradient(#d9e2e8, #96958f); }
.pages { background: linear-gradient(#ffb32e, #fb8a14); }

.divider {
    width: 2px;
    height: 70px;
    margin: 0 7px;
    background: #515154;
}

.mini {
    margin-left: -6px;
}

.mini svg {
    width: 70px;
    height: 60px;
    overflow: visible;
}

.trash svg {
    width: 54px;
    height: 66px;
}
```
